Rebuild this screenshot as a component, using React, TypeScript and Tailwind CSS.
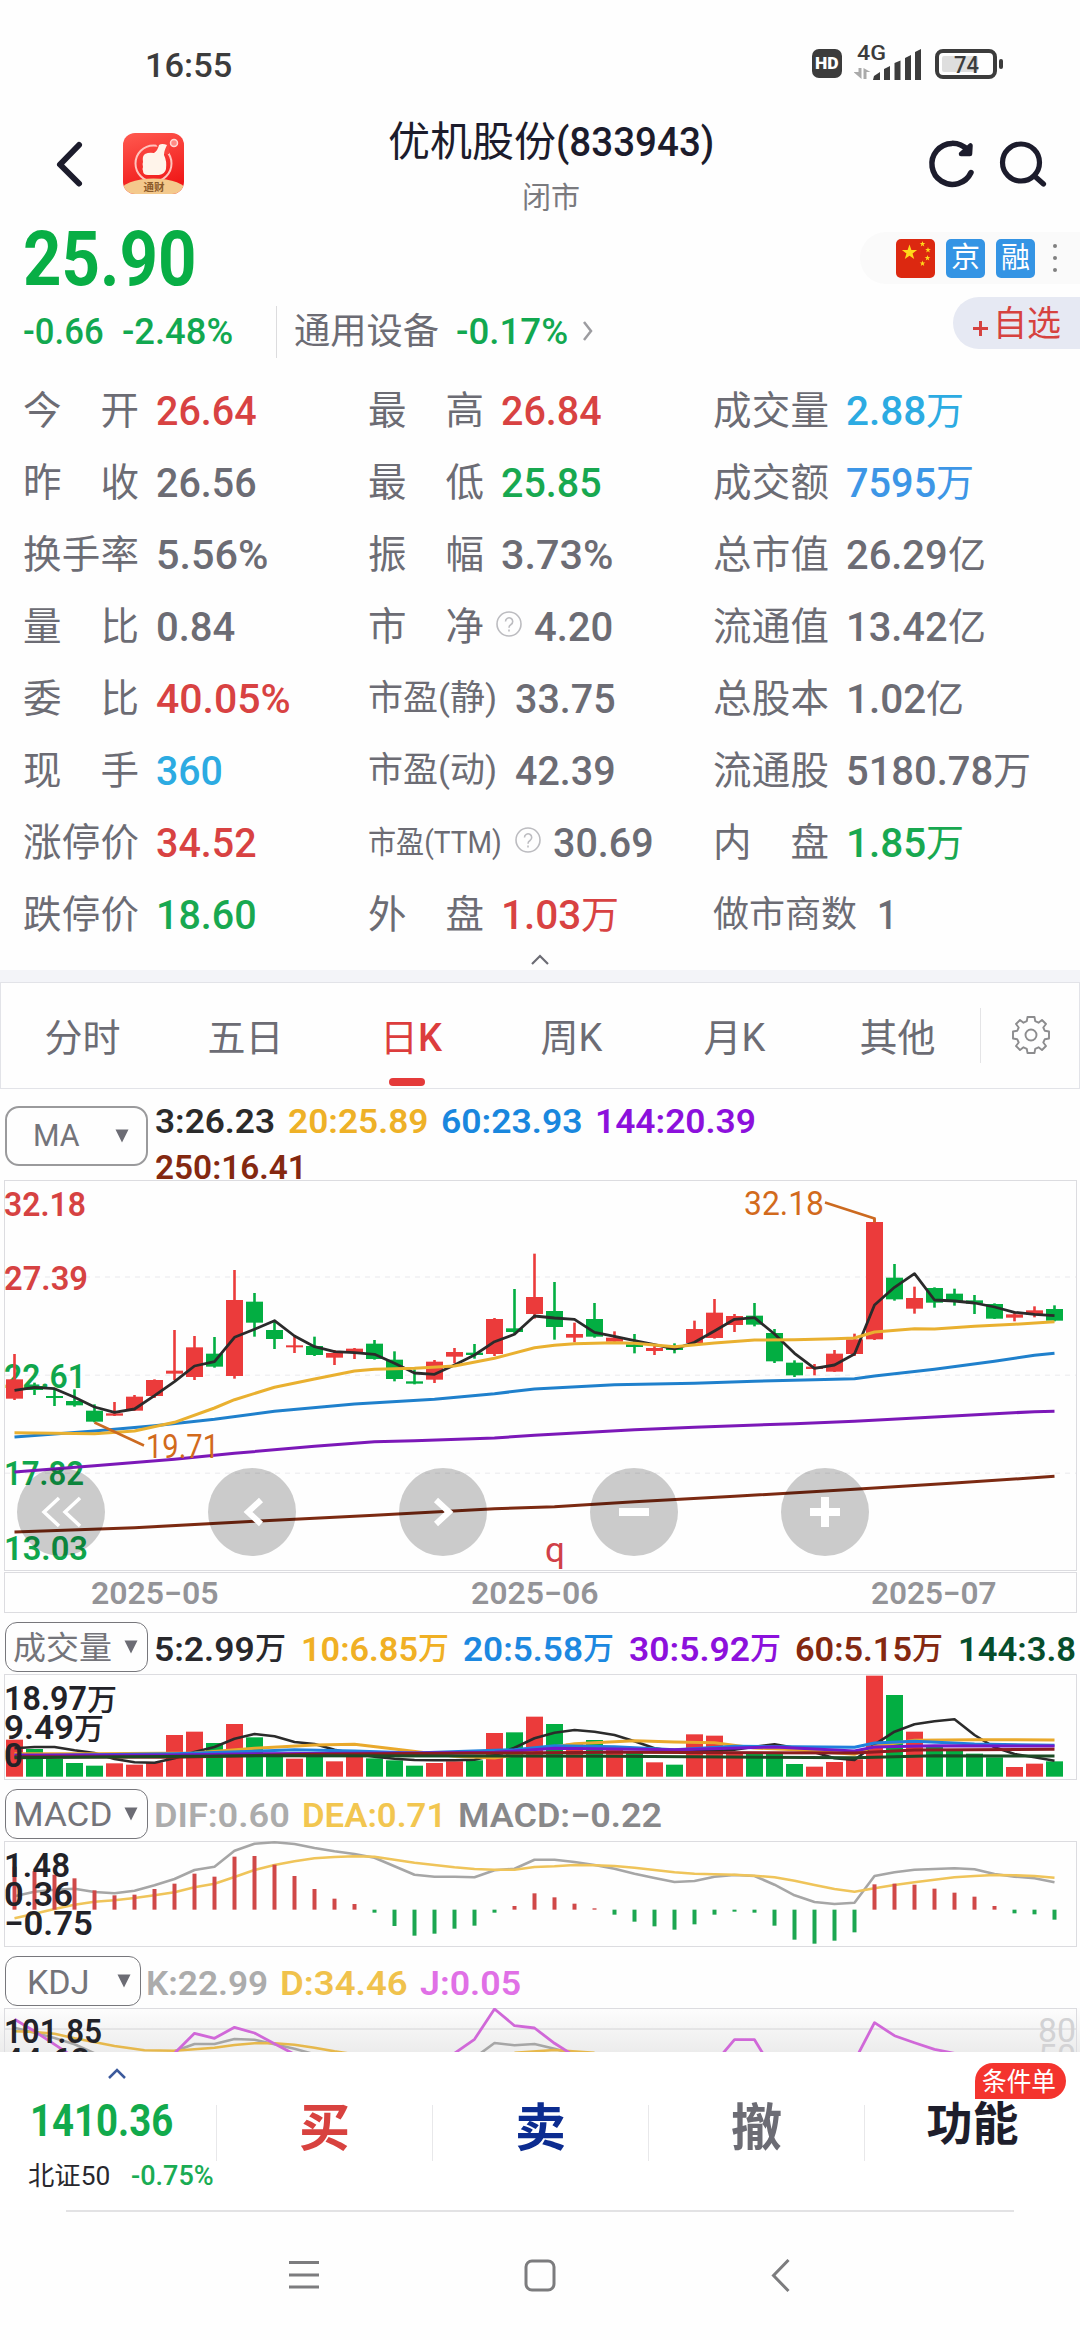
import { useLayoutEffect, useRef, useState, type ReactNode } from "react";

/* Text squeezed or stretched horizontally to fill the width of its box. */
function Fit({ className = "", children }: { className?: string; children: ReactNode }) {
  const outer = useRef<HTMLSpanElement>(null);
  const inner = useRef<HTMLSpanElement>(null);
  const [scale, setScale] = useState(1);
  useLayoutEffect(() => {
    const measure = () => {
      if (outer.current && inner.current && inner.current.offsetWidth > 0) {
        setScale(outer.current.clientWidth / inner.current.offsetWidth);
      }
    };
    measure();
    document.fonts?.ready.then(measure);
  }, []);
  return (
    <span ref={outer} className={"block shrink-0 whitespace-nowrap " + className}>
      <span ref={inner} className="inline-block origin-left" style={{ transform: `scaleX(${scale})` }}>
        {children}
      </span>
    </span>
  );
}

const RED = "#eb3b3b";
const GREEN = "#03ae42";

const cx = (i: number) => 14.5 + 20 * i;

type Pt = [number, number];
const dense = (ys: number[]): Pt[] => ys.map((y, i) => [i, y]);

function Line({ pts, base, color, width = 3 }: { pts: Pt[]; base: number; color: string; width?: number }) {
  return (
    <polyline
      fill="none"
      stroke={color}
      strokeWidth={width}
      strokeLinejoin="round"
      points={pts.map(([i, y]) => `${cx(i)},${((y - base) / 3).toFixed(1)}`).join(" ")}
    />
  );
}

function AxisText({ x = 4, y, w, fill, weight = 600, size = 34, children }: { x?: number; y: number; w: number; fill: string; weight?: number; size?: number; children: string }) {
  return (
    <text x={x} y={y} fontSize={size} fontWeight={weight} fill={fill} textLength={w} lengthAdjust="spacingAndGlyphs">
      {children}
    </text>
  );
}

/* up/down, body top, body bottom, high, low */
const candles: [number, number, number, number, number][] = [
  [1, 628, 686, 552, 690], [0, 648, 660, 638, 675], [0, 678, 684, 655, 708], [0, 693, 706, 658, 710],
  [0, 722, 755, 703, 757], [1, 730, 737, 696, 738], [1, 680, 722, 675, 722], [1, 630, 678, 628, 684],
  [1, 602, 611, 480, 630], [1, 532, 621, 498, 630], [0, 551, 590, 501, 593], [1, 390, 618, 300, 626],
  [0, 395, 458, 369, 500], [0, 480, 507, 455, 537], [1, 526, 532, 498, 549], [0, 528, 555, 500, 558],
  [1, 549, 563, 540, 585], [1, 536, 548, 534, 567], [0, 521, 567, 510, 569], [0, 569, 627, 544, 634],
  [0, 634, 641, 598, 643], [1, 575, 629, 570, 639], [1, 546, 560, 534, 580], [0, 548, 555, 522, 566],
  [1, 447, 552, 444, 558], [0, 475, 486, 357, 490], [1, 381, 432, 251, 446], [0, 423, 471, 336, 509],
  [1, 492, 503, 458, 517], [0, 447, 500, 399, 503], [1, 503, 515, 484, 521], [0, 523, 531, 492, 550],
  [1, 534, 543, 522, 555], [0, 533, 540, 520, 550], [1, 477, 519, 452, 522], [1, 428, 504, 387, 506],
  [1, 438, 465, 432, 486], [0, 437, 464, 399, 469], [0, 489, 574, 477, 579], [0, 578, 616, 571, 621],
  [1, 590, 597, 582, 616], [1, 551, 605, 540, 606], [1, 508, 552, 491, 558], [1, 156, 508, 145, 510],
  [0, 323, 388, 282, 392], [1, 384, 416, 350, 431], [0, 354, 398, 352, 413], [0, 371, 393, 356, 407],
  [0, 391, 401, 375, 432], [0, 402, 446, 400, 447], [1, 433, 443, 425, 454], [1, 421, 434, 409, 442],
  [0, 417, 452, 406, 454],
];

const ma3 = dense([
  661, 652, 656, 682, 711, 727, 717, 677, 635, 588, 575, 502, 478, 452, 498, 530, 545, 548, 553, 580, 609, 613, 585,
  555, 515, 493, 438, 444, 448, 487, 499, 512, 524, 537, 517, 483, 448, 443, 492, 550, 595, 585, 552, 405, 352, 311,
  390, 393, 399, 411, 427, 433, 437,
]);
const ma20: Pt[] = [[0, 788], [2, 790], [4, 791], [6, 783], [8, 757], [10, 714], [11, 689], [13, 652], [15, 627], [17, 603], [18, 598], [19, 596], [20, 595], [22, 588], [24, 565], [26, 533], [27, 526], [28, 521], [30, 518], [31, 520], [33, 530], [35, 519], [37, 510], [39, 509], [41, 506], [42, 504], [43, 486], [45, 476], [46, 477], [48, 469], [50, 463], [52, 455]];
const ma60: Pt[] = [[0, 801], [4, 783], [7, 767], [10, 748], [13, 724], [17, 702], [21, 688], [24, 671], [26, 657], [30, 644], [34, 640], [37, 634], [40, 629], [42, 626], [43, 618], [46, 598], [49, 574], [51, 556], [52, 550]];
const ma144: Pt[] = [[0, 906], [4, 887], [8, 868], [11, 850], [15, 829], [18, 815], [20, 812], [24, 804], [26, 796], [31, 779], [34, 772], [39, 761], [42, 754], [46, 741], [49, 731], [51, 725], [52, 724]];
const ma250: Pt[] = [[0, 1086], [6, 1073], [12, 1054], [18, 1036], [24, 1016], [27, 1010], [31, 995], [36, 979], [42, 958], [47, 939], [52, 919]];

const volTops = [
  390, 418, 448, 460, 468, 461, 465, 458, 376, 366, 400, 343, 383, 437, 447, 437, 455, 437, 446, 452, 468, 460, 455,
  452, 370, 368, 321, 343, 402, 391, 418, 428, 458, 465, 374, 378, 430, 432, 430, 463, 471, 457, 449, 198, 256, 366,
  410, 422, 432, 443, 472, 462, 455,
];
const vol5 = dense([
  416, 412, 412, 422, 430, 448, 458, 459, 446, 427, 412, 387, 373, 380, 397, 403, 420, 432, 441, 447, 451, 452, 452,
  450, 437, 414, 386, 369, 361, 366, 376, 395, 416, 424, 424, 424, 420, 411, 404, 414, 428, 446, 451, 405, 366, 344,
  335, 329, 376, 413, 433, 443, 453,
]);
const vol10: Pt[] = [[0, 432], [4, 432], [9, 430], [12, 416], [15, 406], [17, 404], [19, 418], [22, 440], [24, 445], [25, 436], [26, 420], [28, 402], [30, 396], [31, 393], [33, 397], [35, 399], [37, 415], [39, 420], [42, 434], [43, 410], [45, 392], [48, 390], [52, 391]];
const vol20: Pt[] = [[0, 438], [8, 432], [12, 425], [14, 420], [17, 424], [20, 430], [25, 420], [27, 408], [30, 411], [33, 420], [36, 410], [42, 413], [43, 400], [45, 395], [48, 403], [52, 407]];
const vol30: Pt[] = [[0, 436], [8, 436], [12, 432], [20, 430], [24, 428], [27, 416], [33, 420], [38, 412], [42, 424], [43, 412], [46, 408], [52, 409]];
const vol60: Pt[] = [[0, 441], [8, 443], [15, 434], [24, 430], [30, 428], [42, 430], [45, 421], [52, 419]];
const vol144: Pt[] = [[0, 444], [12, 438], [24, 439], [30, 440], [42, 444], [46, 438], [52, 439]];

const macdBars = [
  771, 785, 795, 806, 842, 857, 855, 838, 822, 792, 801, 741, 739, 765, 799, 838, 867, 883, 909, 949, 978, 972, 957,
  948, 909, 889, 851, 863, 882, 896, 915, 936, 950, 960, 944, 915, 906, 909, 948, 990, 1002, 993, 968, 824, 822, 825,
  837, 849, 861, 889, 911, 914, 930,
];
const dif = dense([
  860, 846, 840, 837, 847, 851, 843, 827, 808, 781, 771, 723, 702, 698, 703, 715, 725, 733, 744, 770, 795, 801, 801,
  803, 782, 777, 750, 750, 757, 766, 777, 792, 805, 817, 814, 801, 796, 799, 825, 857, 877, 883, 879, 799, 788, 780,
  778, 776, 779, 793, 801, 806, 818,
]);
const dea = dense([
  926, 912, 898, 885, 876, 872, 865, 857, 848, 833, 822, 802, 781, 766, 755, 746, 742, 740, 741, 750, 759, 766, 773,
  778, 780, 780, 772, 770, 766, 767, 769, 774, 781, 788, 792, 794, 795, 798, 803, 813, 826, 838, 846, 836, 826, 818,
  810, 803, 799, 796, 797, 799, 804,
]);

const kdjJ: Pt[][] = [
  [[0, 1230], [1, 1266], [2, 1305], [3, 1345]],
  [[8, 1332], [9, 1272], [10, 1287], [11, 1254], [12, 1271], [13, 1303], [14, 1335]],
  [[22, 1332], [23, 1290], [24, 1199], [25, 1249], [26, 1256], [27, 1302], [28, 1340]],
  [[35, 1362], [36, 1291], [37, 1291], [38, 1390]],
  [[42, 1355], [43, 1240], [44, 1279], [45, 1300], [46, 1320], [47, 1332]],
];
const kdjK: Pt[][] = [
  [[0, 1255], [1, 1270], [2, 1286], [3, 1305], [4, 1332]],
  [[8, 1326], [9, 1304], [10, 1304], [11, 1289], [12, 1291], [13, 1305], [14, 1318], [15, 1335]],
  [[23, 1345], [24, 1301], [25, 1308], [26, 1304], [27, 1318], [28, 1335]],
];
const kdjD: Pt[][] = [
  [[0, 1266], [1, 1268], [2, 1273], [3, 1287], [5, 1310], [6.5, 1323], [8, 1324], [10, 1315], [11, 1307], [12, 1302], [13, 1302], [14, 1306], [15, 1315], [16, 1326], [17, 1335]],
  [[25, 1330], [27, 1322], [29, 1330]],
];

function Frame({ h }: { h: number }) {
  return <rect x="4.5" y="0.5" width="1072" height={h} fill="none" stroke="#dcdce0" />;
}

function StatusBar() {
  return (
    <div className="flex h-[100px] items-start pt-[42px] pl-[145px] text-[#3c3c3c]">
      <Fit className="mt-1 w-[87px] text-[34px] leading-[38px] font-medium">16:55</Fit>
      <div className="mt-[7px] ml-[580px] flex h-[29px] w-[30px] items-center justify-center rounded-[7px] bg-[#3c3c3c]">
        <Fit className="w-[24px] text-[16px] leading-none font-black text-white">HD</Fit>
      </div>
      <svg className="mt-0 ml-[12px]" width="150" height="40" viewBox="854 42 150 40">
        <text x="857" y="60" fontSize="20" fontWeight="500" fill="#3c3c3c" textLength="29" lengthAdjust="spacingAndGlyphs">4G</text>
        <g fill="#aaa">
          <path d="M858.500 68h3v11l-8-7h5z" />
          <path d="M863.500 79h3v-7h4l-7-4z" />
        </g>
        <g fill="#3c3c3c">
          <path d="M874 76l6-4v8h-7zM884 69l6-3v14h-6zM894.500 63l6-2.500v19.500h-6zM905 58l6-3v25h-6zM915 52l6-3v31h-6z" />
          <rect x="999" y="59" width="4" height="10" rx="2" />
        </g>
        <rect x="937" y="51" width="58" height="26" rx="6" fill="none" stroke="#3c3c3c" strokeWidth="4" />
        <rect x="942" y="56" width="36" height="16" rx="2" fill="#dedede" />
        <text x="954" y="73" fontSize="23" fontWeight="500" fill="#3c3c3c" textLength="25" lengthAdjust="spacingAndGlyphs">74</text>
      </svg>
    </div>
  );
}

function AppLogo() {
  return (
    <svg width="61" height="61" viewBox="0 0 61 61">
      <defs>
        <linearGradient id="logoRed" x1="0" y1="0" x2="0.3" y2="1">
          <stop offset="0" stopColor="#ff5a50" />
          <stop offset="1" stopColor="#f01818" />
        </linearGradient>
        <clipPath id="logoClip"><rect width="61" height="61" rx="12" /></clipPath>
      </defs>
      <g clipPath="url(#logoClip)">
        <rect width="61" height="61" fill="url(#logoRed)" />
        <circle cx="30.500" cy="30.500" r="18" fill="none" stroke="#ffc4bd" strokeWidth="2" />
        <path d="M33 11h13v10h-8z" fill="#fa453e" />
        <ellipse cx="30.500" cy="58" rx="33" ry="12.500" fill="#f4c98c" />
        <path d="M22 21q4-2 9-1 4-3 5-8 3-2 8 0-3 6-3 10 3 6 2 14-1 5-7 6H25q-5 0-5-4-1-2 0-4-1-3 0-5-1-6 2-8z" fill="#fff4ea" />
        <circle cx="51" cy="10" r="3.500" fill="#ff8b84" stroke="#ffd8d4" strokeWidth="1.500" />
        <text x="20.500" y="57.500" fontSize="10.500" fontWeight="700" fill="#8c5a2a">通财</text>
      </g>
    </svg>
  );
}

function Header() {
  return (
    <header className="flex h-[125px] text-[#1c1c2c]">
      <svg className="mt-[38px] ml-[54px]" width="32" height="54" viewBox="0 0 32 54">
        <path d="M25 7L6 26.500L25 45.500" fill="none" stroke="#1c1c2c" strokeWidth="6" strokeLinecap="round" strokeLinejoin="round" />
      </svg>
      <div className="mt-[33px] ml-[37px]"><AppLogo /></div>
      <div className="mt-[16px] ml-[204px] flex w-[326px] flex-col items-center">
        <div className="flex h-[52px] items-center text-[41px] leading-[52px]">
          <Fit className="w-[168px]">优机股份</Fit>
          <Fit className="w-[158px] font-medium">(833943)</Fit>
        </div>
        <span className="mt-[8px] text-[29px] leading-[44px] text-[#7a7a7e]">闭市</span>
      </div>
      <svg className="mt-[38px] ml-[211px]" width="52" height="54" viewBox="925 138 52 54">
        <path d="M971 172.500A20.500 20.500 0 1 1 967.500 150" fill="none" stroke="#1c1c2c" strokeWidth="5.500" strokeLinecap="round" />
        <path d="M970.500 145.500l-0.500 8.500h-9z" fill="#1c1c2c" stroke="#1c1c2c" strokeWidth="4.500" strokeLinejoin="round" />
      </svg>
      <svg className="mt-[38px] ml-[21px]" width="54" height="54" viewBox="998 138 54 54">
        <circle cx="1021" cy="162.500" r="18.500" fill="none" stroke="#1c1c2c" strokeWidth="5.200" />
        <path d="M1034.500 176L1043.500 184" stroke="#1c1c2c" strokeWidth="5.200" strokeLinecap="round" />
      </svg>
    </header>
  );
}

function Star({ x, y, r }: { x: number; y: number; r: number }) {
  const pts = Array.from({ length: 10 }, (_, k) => {
    const a = -Math.PI / 2 + (k * Math.PI) / 5;
    const q = k % 2 ? r * 0.4 : r;
    return `${x + q * Math.cos(a)},${y + q * Math.sin(a)}`;
  });
  return <polygon points={pts.join(" ")} fill="#ffd91a" />;
}

function PriceBlock() {
  return (
    <section className="flex h-[150px] justify-between">
      <div className="pl-[23px]">
        <Fit className="mt-[-9px] w-[173px] text-[76px] leading-[86px] font-bold text-[#08ae45]">25.90</Fit>
        <div className="mt-[2px] flex h-[56px] items-center text-[36px] leading-[50px] font-medium text-[#12a850]">
          <Fit className="w-[81px]">-0.66</Fit>
          <Fit className="ml-[18px] w-[111px]">-2.48%</Fit>
          <span className="ml-[43px] h-[52px] w-px bg-[#dcdcde]" />
          <Fit className="ml-[17px] w-[145px] font-normal text-[#6c6c74]">通用设备</Fit>
          <Fit className="ml-[17px] w-[112px]">-0.17%</Fit>
          <svg className="-mt-[3px] ml-[13px]" width="14" height="24" viewBox="0 0 14 24">
            <path d="M3 3l7 9-7 9" fill="none" stroke="#9c9ca0" strokeWidth="2.500" />
          </svg>
        </div>
      </div>
      <div className="flex flex-col items-end pt-[7px]">
        <div className="flex h-[52px] w-[220px] items-center rounded-l-full bg-[#fafafa] pl-[36px]">
          <svg width="39" height="39" viewBox="0 0 39 39">
            <rect width="39" height="39" rx="5" fill="#dc2810" />
            <Star x={13.5} y={13.5} r={8} />
            <Star x={26.5} y={5} r={3} />
            <Star x={32} y={11} r={3} />
            <Star x={31.5} y={19} r={3} />
            <Star x={26.5} y={24.500} r={3} />
          </svg>
          <span className="ml-[11px] flex h-[39px] w-[39px] items-center justify-center rounded-[5px] bg-[#3494e4] text-[29px] leading-none text-white">京</span>
          <span className="ml-[11px] flex h-[39px] w-[39px] items-center justify-center rounded-[5px] bg-[#3494e4] text-[29px] leading-none text-white">融</span>
          <span className="ml-[18px] flex flex-col gap-[8px]">
            <i className="h-[4px] w-[4px] rounded-full bg-[#808080]" />
            <i className="h-[4px] w-[4px] rounded-full bg-[#808080]" />
            <i className="h-[4px] w-[4px] rounded-full bg-[#808080]" />
          </span>
        </div>
        <div className="mt-[13px] flex h-[52px] w-[127px] items-center rounded-l-full bg-[#e6e9f3] pl-[19px] text-[#d6423f]">
          <svg width="17" height="17" viewBox="0 0 17 17" className="mt-[11px]">
            <path d="M8.500 1v15M1 8.500h15" stroke="#d6423f" strokeWidth="3" />
          </svg>
          <Fit className="mt-[4px] ml-[4px] w-[68px] text-[35px] leading-[52px]">自选</Fit>
        </div>
      </div>
    </section>
  );
}

function Help() {
  return (
    <svg width="28" height="28" viewBox="0 0 28 28" className="mb-[6px] shrink-0">
      <circle cx="14" cy="14" r="12" fill="none" stroke="#bcbcc0" strokeWidth="1.600" />
      <path d="M10.500 11.500a3.600 3.600 0 1 1 5.500 3q-2 1.200-2 3.200M14 19.500v2" fill="none" stroke="#bcbcc0" strokeWidth="1.600" />
    </svg>
  );
}

const tone = { r: "text-[#d84242]", g: "text-[#18a850]", b: "text-[#2cabe2]", d: "text-[#3d96e6]", k: "text-[#6c6c74]" };

type Cell = {
  label: string;
  value: string;
  t: keyof typeof tone;
  w: string;
  cn?: string;
  kind?: string;
};

const rows: Cell[][] = [
  [
    { label: "今开", value: "26.64", t: "r", w: "w-[101px]" },
    { label: "最高", value: "26.84", t: "r", w: "w-[101px]" },
    { label: "成交量", value: "2.88", cn: "万", t: "b", w: "w-[80px]" },
  ],
  [
    { label: "昨收", value: "26.56", t: "k", w: "w-[101px]" },
    { label: "最低", value: "25.85", t: "g", w: "w-[101px]" },
    { label: "成交额", value: "7595", cn: "万", t: "d", w: "w-[90px]" },
  ],
  [
    { label: "换手率", value: "5.56%", t: "k", w: "w-[113px]" },
    { label: "振幅", value: "3.73%", t: "k", w: "w-[113px]" },
    { label: "总市值", value: "26.29", cn: "亿", t: "k", w: "w-[102px]" },
  ],
  [
    { label: "量比", value: "0.84", t: "k", w: "w-[79px]" },
    { label: "市净", value: "4.20", t: "k", w: "w-[79px]", kind: "help" },
    { label: "流通值", value: "13.42", cn: "亿", t: "k", w: "w-[102px]" },
  ],
  [
    { label: "委比", value: "40.05%", t: "r", w: "w-[135px]" },
    { label: "市盈(静)", value: "33.75", t: "k", w: "w-[101px]", kind: "pe" },
    { label: "总股本", value: "1.02", cn: "亿", t: "k", w: "w-[80px]" },
  ],
  [
    { label: "现手", value: "360", t: "b", w: "w-[67px]" },
    { label: "市盈(动)", value: "42.39", t: "k", w: "w-[101px]", kind: "pe" },
    { label: "流通股", value: "5180.78", cn: "万", t: "k", w: "w-[147px]" },
  ],
  [
    { label: "涨停价", value: "34.52", t: "r", w: "w-[101px]" },
    { label: "市盈(TTM)", value: "30.69", t: "k", w: "w-[101px]", kind: "ttm" },
    { label: "内盘", value: "1.85", cn: "万", t: "g", w: "w-[80px]" },
  ],
  [
    { label: "跌停价", value: "18.60", t: "g", w: "w-[101px]" },
    { label: "外盘", value: "1.03", cn: "万", t: "r", w: "w-[80px]" },
    { label: "做市商数", value: "1", t: "k", w: "w-[20px]", kind: "four" },
  ],
];

function QuoteCell({ c }: { c: Cell }) {
  let label: ReactNode;
  if (c.kind === "pe") label = <Fit className="mr-[18px] w-[129px] text-[35px]">{c.label}</Fit>;
  else if (c.kind === "ttm") label = <Fit className="mr-[12px] w-[134px] text-[31px]">{c.label}</Fit>;
  else if (c.kind === "four") label = <Fit className="mr-[20px] w-[144px] text-[36px]">{c.label}</Fit>;
  else
    label = (
      <span className={"flex w-[116px] shrink-0 justify-between text-[38.500px] " + (c.kind === "help" ? "mr-[11px]" : "mr-[17px]")}>
        {c.label.split("").map((ch) => (
          <span key={ch}>{ch}</span>
        ))}
      </span>
    );
  return (
    <div className="flex h-[72px] items-center leading-[72px] text-[#6c6c74]">
      {label}
      {(c.kind === "help" || c.kind === "ttm") && <Help />}
      <span className={"flex text-[41px] font-medium " + (c.kind === "help" || c.kind === "ttm" ? "ml-[11px] " : "") + tone[c.t]}>
        <Fit className={c.w}>{c.value}</Fit>
        {c.cn && <span className="text-[38px] font-normal">{c.cn}</span>}
      </span>
    </div>
  );
}

function Quotes() {
  return (
    <section className="h-[595px]">
      <div className="grid grid-cols-[345px_345px_1fr] pl-[23px]">
        {rows.flat().map((c) => (
          <QuoteCell key={c.label} c={c} />
        ))}
      </div>
      <svg className="mx-auto mt-[2px]" width="24" height="14" viewBox="0 0 24 14">
        <path d="M4 11l8-8 8 8" fill="none" stroke="#6c6c74" strokeWidth="2.200" />
      </svg>
    </section>
  );
}

function Tabs() {
  const tabs = ["分时", "五日", "日K", "周K", "月K", "其他"];
  return (
    <>
      <div className="h-[12px] bg-[#f3f4f8]" />
      <nav className="flex h-[107px] border border-[#e2e3e8]">
        {tabs.map((t) => (
          <div key={t} className={"flex w-[163px] flex-col items-center text-[38px] leading-[56px] " + (t === "日K" ? "text-[#dc3d3d]" : "text-[#6c6c74]")}>
            {t === "日K" ? (
              <>
                <span className="mt-[27px] flex pl-[5px]">
                  日<span className="font-medium">K</span>
                </span>
                <span className="mt-[12px] mr-[3px] h-[8px] w-[36px] rounded-[4px] bg-[#e43a3a]" />
              </>
            ) : (
              <span className="mt-[27px]">{t}</span>
            )}
          </div>
        ))}
        <span className="mt-[25px] ml-px h-[55px] w-px bg-[#e4e4e6]" />
        <svg className="mt-[30px] ml-[28px]" width="44" height="44" viewBox="1009 1013 44 44" fill="none" stroke="#8c8c8e" strokeWidth="1.900" strokeLinejoin="round">
          <g transform="translate(1031 1035)">
            <path d="M-3.500 -18H3.500L4.200 -13.800L7.500 -12.300L11 -15L15 -11L12.300 -7.500L13.800 -4.200L18 -3.500V3.500L13.800 4.200L12.300 7.500L15 11L11 15L7.500 12.300L4.200 13.800L3.500 18H-3.500L-4.200 13.800L-7.500 12.300L-11 15L-15 11L-12.300 7.500L-13.800 4.200L-18 3.500V-3.500L-13.800 -4.200L-12.300 -7.500L-15 -11L-11 -15L-7.500 -12.300L-4.200 -13.800Z" />
            <circle r="5.500" />
          </g>
        </svg>
      </nav>
    </>
  );
}

function Triangle() {
  return (
    <svg width="14" height="14" viewBox="0 0 14 14">
      <path d="M0.500 0.500h13L7 13.500z" fill="#6c6c74" />
    </svg>
  );
}

function CandleChart() {
  return (
    <section>
      <div className="flex h-[91px]">
        <div className="mt-[17px] ml-[5px] flex h-[60px] w-[143px] items-center rounded-[14px] border-2 border-[#9a9a9c] pl-[26px] text-[#74747a]">
          <Fit className="w-[47px] text-[31px] leading-[50px]">MA</Fit>
          <span className="ml-[35px]"><Triangle /></span>
        </div>
        <div className="mt-[9px] ml-[7px] text-[34px] leading-[46px] font-semibold">
          <div className="flex gap-[13px]">
            <Fit className="w-[120px] text-[#2b2b2b]">3:26.23</Fit>
            <Fit className="w-[140px] text-[#eeb127]">20:25.89</Fit>
            <Fit className="w-[141px] text-[#1987de]">60:23.93</Fit>
            <Fit className="w-[161px] text-[#8c10dc]">144:20.39</Fit>
          </div>
          <Fit className="w-[152px] text-[#842810]">250:16.41</Fit>
        </div>
      </div>
      <div className="relative h-[392px]">
        <svg width="1080" height="392" viewBox="0 0 1080 392" className="block">
          <Frame h={390} />
          {[97, 195.300, 293.300].map((y) => (
            <path key={y} d={`M5 ${y}H1076`} stroke="#f0f0f2" strokeWidth="1.500" strokeDasharray="5 5" />
          ))}
          <AxisText y={35.500} w={82} fill="#d64242">32.18</AxisText>
          <AxisText y={109.500} w={84} fill="#d64242">27.39</AxisText>
          <AxisText y={208} w={82} fill="#10a64c">22.61</AxisText>
          <AxisText y={304.500} w={80} fill="#10a64c">17.82</AxisText>
          <AxisText y={379.500} w={84} fill="#10a64c">13.03</AxisText>
          {candles.map(([up, t, b, hi, lo], i) => (
            <g key={i} fill={up ? RED : GREEN}>
              <rect x={cx(i) - 1.3} y={hi / 3 - 10} width="2.600" height={(lo - hi) / 3} />
              <rect x={cx(i) - 8.500} y={t / 3 - 10} width="17" height={(b - t) / 3} />
            </g>
          ))}
          <Line pts={ma250} base={30} color="#7c2a12" />
          <Line pts={ma144} base={30} color="#7c18b8" />
          <Line pts={ma60} base={30} color="#1f80cc" />
          <Line pts={ma3} base={30} color="#2b2b2b" width={2.8} />
          <Line pts={ma20} base={30} color="#e9b030" />
          <path d="M94.500 242.500L144 265.500" stroke="#cc6a20" strokeWidth="2.500" />
          <AxisText x={146} y={277.500} w={73} fill="#d26a1c" weight={400}>19.71</AxisText>
          <path d="M825 22.500L874.500 38.500v4" fill="none" stroke="#cc6a20" strokeWidth="2.500" />
          <AxisText x={744} y={34.800} w={80} fill="#d26a1c" weight={400}>32.18</AxisText>
          <text x="545" y="382" fontSize="35" fill="#d04048">q</text>
        </svg>
        <div className="absolute top-[288px] left-[17px] flex gap-[103px]">
          {["M57 48L42 62 57 76M78 48L63 62 78 76", "M53 50L40 62 53 74", "M37 50L50 62 37 74", "M29 62H59", "M29 62H59M44 47V77"].map((d, k) => (
            <svg key={k} width="88" height="88" viewBox={k === 0 ? "15 18 88 88" : "0 18 88 88"} className="rounded-full bg-black/20">
              <path d={d} fill="none" stroke="#fff" strokeWidth={[3.5, 6, 6, 8, 8][k]} />
            </svg>
          ))}
        </div>
      </div>
      <div className="ml-[4px] flex h-[41px] w-[1073px] items-center border border-[#dcdce0] text-[31px] leading-[38px] font-semibold text-[#949498]">
        <Fit className="mt-[2px] ml-[86px] w-[128px]">2025−05</Fit>
        <Fit className="mt-[2px] ml-[252px] w-[128px]">2025−06</Fit>
        <Fit className="mt-[2px] ml-[272px] w-[126px]">2025−07</Fit>
      </div>
    </section>
  );
}

function Selector({ children, wide = true }: { children: ReactNode; wide?: boolean }) {
  return (
    <div className={"flex h-[50px] shrink-0 items-center justify-between rounded-[12px] border border-[#77777c] pr-[9px] pl-[7px] text-[#74747a] " + (wide ? "w-[143px]" : "w-[136px]")}>
      {children}
      <Triangle />
    </div>
  );
}

function Volume() {
  const readouts = [
    { v: "5:2.99", w: "w-[101px]", color: "text-[#28282c]", wan: true },
    { v: "10:6.85", w: "w-[117px]", color: "ml-[16px] text-[#f0b024]", wan: true },
    { v: "20:5.58", w: "w-[120px]", color: "ml-[15px] text-[#1c88e0]", wan: true },
    { v: "30:5.92", w: "w-[121px]", color: "ml-[16px] text-[#8c10dc]", wan: true },
    { v: "60:5.15", w: "w-[117px]", color: "ml-[15px] text-[#842810]", wan: true },
    { v: "144:3.8", w: "w-[118px]", color: "ml-[16px] text-[#064e2c]", wan: false },
  ];
  return (
    <section className="pt-[9px]">
      <div className="flex h-[52px] overflow-hidden pl-[5px]">
        <Selector><Fit className="mt-[2px] w-[99px] text-[32px] leading-[46px]">成交量</Fit></Selector>
        <div className="mt-[2px] ml-[6px] flex h-[50px] items-center text-[34px] leading-[50px] font-semibold">
          {readouts.map(({ v, w, color, wan }) => (
            <span key={v} className={"flex " + color}>
              <Fit className={w}>{v}</Fit>
              {wan && <span className="w-[30px] text-[31px] font-medium">万</span>}
            </span>
          ))}
        </div>
      </div>
      <svg width="1080" height="106" viewBox="0 0 1080 106" className="block">
        <Frame h={105} />
        {volTops.map((t, i) => (
          <rect key={i} x={cx(i) - 8.500} y={(t - 193) / 3} width="17" height={(501 - t) / 3} fill={candles[i][0] ? RED : GREEN} />
        ))}
        <AxisText y={35.500} w={83} fill="#222228">18.97</AxisText>
        <text x="87" y="35.500" fontSize="30" fontWeight="500" fill="#222228">万</text>
        <AxisText y={64.500} w={70} fill="#222228">9.49</AxisText>
        <text x="74" y="64.500" fontSize="30" fontWeight="500" fill="#222228">万</text>
        <Line pts={vol5} base={193} color="#2b2b2b" width={2.600} />
        <Line pts={vol10} base={193} color="#e9a92c" />
        <Line pts={vol20} base={193} color="#1f80dc" />
        <Line pts={vol30} base={193} color="#7418c8" />
        <Line pts={vol60} base={193} color="#8c1c20" />
        <Line pts={vol144} base={193} color="#1c4a24" />
        <AxisText y={93} w={19} fill="#222228">0</AxisText>
      </svg>
    </section>
  );
}

function Macd() {
  return (
    <section className="pt-[9px]">
      <div className="flex h-[52px] pl-[5px]">
        <Selector><Fit className="w-[99px] text-[34px] leading-[46px]">MACD</Fit></Selector>
        <div className="mt-[1px] ml-[6px] flex h-[50px] items-center text-[34px] leading-[50px] font-semibold">
          <Fit className="w-[136px] text-[#acacac]">DIF:0.60</Fit>
          <Fit className="ml-[12px] w-[144px] text-[#f2c650]">DEA:0.71</Fit>
          <Fit className="ml-[12px] w-[204px] text-[#88888a]">MACD:−0.22</Fit>
        </div>
      </div>
      <svg width="1080" height="106" viewBox="0 0 1080 106" className="block">
        <Frame h={105} />
        <Line pts={dif} base={694} color="#a6a6a6" width={2.600} />
        <Line pts={dea} base={694} color="#efc45a" width={2.600} />
        {macdBars.map((v, i) => {
          const top = Math.min(v, 900);
          return <rect key={i} x={cx(i) - 2} y={(top - 694) / 3} width="4" height={Math.abs(v - 900) / 3} fill={v < 900 ? "#d04848" : "#1ca650"} />;
        })}
        <AxisText y={35.500} w={66} fill="#222228">1.48</AxisText>
        <AxisText y={64.500} w={69} fill="#222228">0.36</AxisText>
        <AxisText y={94} w={89} fill="#222228">−0.75</AxisText>
      </svg>
    </section>
  );
}

function Kdj() {
  return (
    <section className="h-[105px] overflow-hidden pt-[9px]">
      <div className="flex h-[52px] pl-[5px]">
        <Selector wide={false}><Fit className="mt-[1px] ml-[14px] w-[62px] text-[34px] leading-[46px]">KDJ</Fit></Selector>
        <div className="mt-[2px] ml-[5px] flex h-[50px] items-center text-[34px] leading-[50px] font-semibold">
          <Fit className="w-[122px] text-[#acacac]">K:22.99</Fit>
          <Fit className="ml-[12px] w-[128px] text-[#f0c24c]">D:34.46</Fit>
          <Fit className="ml-[12px] w-[101px] text-[#e070e6]">J:0.05</Fit>
        </div>
      </div>
      <svg width="1080" height="44" viewBox="0 0 1080 44" className="block">
        <defs>
          <linearGradient id="kdjShade" x1="0" y1="0" x2="0" y2="1">
            <stop offset="0" stopColor="#fdfdfd" />
            <stop offset="1" stopColor="#ececec" />
          </linearGradient>
        </defs>
        <rect width="1080" height="44" fill="url(#kdjShade)" />
        <Frame h={105} />
        <path d="M5 21H1076" stroke="#d4d4d6" />
        {kdjK.map((p, k) => <Line key={k} pts={p} base={1196} color="#a6a6a6" width={2.600} />)}
        {kdjD.map((p, k) => <Line key={k} pts={p} base={1196} color="#e6b84c" width={2.600} />)}
        {kdjJ.map((p, k) => <Line key={k} pts={p} base={1196} color="#d068d8" width={2.800} />)}
        <AxisText y={35} w={98} fill="#222228">101.85</AxisText>
        <AxisText y={64} w={86} fill="#222228">44.63</AxisText>
        <AxisText x={1038} y={34} w={38} fill="#d2d2d4" weight={400}>80</AxisText>
        <AxisText x={1038} y={60} w={38} fill="#d2d2d4" weight={400}>50</AxisText>
      </svg>
    </section>
  );
}

function Action({ className, children }: { className: string; children: ReactNode }) {
  return (
    <div className="mt-[53px] flex h-[56px] w-[216px] items-start justify-center border-l border-[#e8e8ea]">
      <span className={"leading-[56px] " + className}>{children}</span>
    </div>
  );
}

function BottomBar() {
  return (
    <footer className="relative z-10 h-[158px] bg-white">
      <div className="flex">
        <div className="w-[216px]">
          <svg className="mt-[13px] ml-[105px]" width="24" height="18" viewBox="0 0 24 18">
            <path d="M4 13l8-8 8 8" fill="none" stroke="#3c5a9c" strokeWidth="2.500" />
          </svg>
          <Fit className="mt-[11px] ml-[30px] w-[143px] text-[44px] leading-[54px] font-bold text-[#12aa4c]">1410.36</Fit>
          <div className="mt-[8px] flex pl-[28px] leading-[40px]">
            <Fit className="w-[82px] text-[26px] text-[#28282e]">北证50</Fit>
            <Fit className="ml-[21px] w-[83px] text-[28px] font-medium text-[#1aac54]">-0.75%</Fit>
          </div>
        </div>
        <Action className="-mt-[4px] text-[51px] font-bold text-[#d8423f]">买</Action>
        <Action className="-mt-[4px] text-[51px] font-bold text-[#0c2c90]">卖</Action>
        <Action className="-mt-[4px] text-[51px] font-bold text-[#6c6c74]">撤</Action>
        <Action className="-mt-[9px] text-[46px] font-bold text-[#1e1e2c]">功能</Action>
      </div>
      <span className="absolute top-[11px] left-[975px] flex h-[36px] w-[91px] items-center justify-center rounded-[18px] rounded-bl-none bg-[#f4342e] text-[26px] leading-none text-white">
        <Fit className="mt-[1px] mr-[4px] w-[74px]">条件单</Fit>
      </span>
    </footer>
  );
}

function SystemNav() {
  return (
    <div className="h-[130px]">
      <div className="mx-auto h-[2px] w-[948px] bg-[#e2e2e4]" />
      <div className="flex pt-[47px] pl-[288px]">
        <svg width="32" height="34" viewBox="0 0 32 34">
          <path d="M1 3.500H31M1 16H31M1 28H31" stroke="#7c7c7e" strokeWidth="3.200" />
        </svg>
        <svg className="ml-[202px]" width="36" height="36" viewBox="0 0 36 36">
          <rect x="4" y="2" width="28" height="29" rx="6" fill="none" stroke="#7c7c7e" strokeWidth="3" />
        </svg>
        <svg className="ml-[210px]" width="24" height="36" viewBox="0 0 24 36">
          <path d="M20.500 1L5.500 16.500L20.500 32" fill="none" stroke="#7c7c7e" strokeWidth="3" />
        </svg>
      </div>
    </div>
  );
}

export default function App() {
  return (
    <main className="h-[2340px] w-[1080px] overflow-hidden bg-[#fefefe] font-['Roboto','Noto_Sans_CJK_SC',sans-serif]">
      <StatusBar />
      <Header />
      <PriceBlock />
      <Quotes />
      <Tabs />
      <CandleChart />
      <Volume />
      <Macd />
      <Kdj />
      <BottomBar />
      <SystemNav />
    </main>
  );
}
